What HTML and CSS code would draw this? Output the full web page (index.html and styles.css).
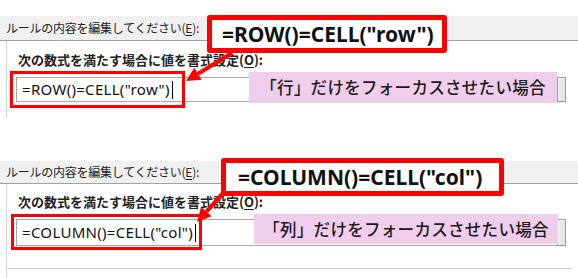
FILE: index.html
```html
<!DOCTYPE html>
<html lang="ja">
<head>
<meta charset="utf-8">
<link rel="stylesheet" href="styles.css">
</head>
<body>
<section class="panel panel-row">
  <div class="head">ルールの内容を編集してください(<u>E</u>):</div>
  <div class="frame">
    <div class="label">次の数式を満たす場合に値を書式設定(<u>O</u>):</div>
    <div class="field-row">
      <div class="field">=ROW()=CELL("row")<span class="caret"></span></div>
      <div class="ref-btn"></div>
    </div>
  </div>
  <div class="hilite"></div>
  <svg class="arrow" width="578" height="120" viewBox="0 0 578 120">
    <line x1="232" y1="37" x2="198" y2="57.7" stroke="#f00" stroke-width="4"/>
    <polygon points="186,65 201.6,63.7 194.3,51.7" fill="#f00"/>
  </svg>
  <div class="callout">=ROW()=CELL("row")</div>
  <div class="note">「行」だけをフォーカスさせたい場合</div>
</section>

<section class="panel panel-col">
  <div class="head">ルールの内容を編集してください(<u>E</u>):</div>
  <div class="frame">
    <div class="label">次の数式を満たす場合に値を書式設定(<u>O</u>):</div>
    <div class="field-row">
      <div class="field">=COLUMN()=CELL("col")<span class="caret"></span></div>
      <div class="ref-btn"></div>
    </div>
    <div class="divider"></div>
  </div>
  <div class="hilite"></div>
  <svg class="arrow" width="578" height="120" viewBox="0 0 578 120">
    <line x1="232" y1="22" x2="206.4" y2="50.6" stroke="#f00" stroke-width="4"/>
    <polygon points="197,61 211.6,55.3 201.1,45.9" fill="#f00"/>
  </svg>
  <div class="callout">=COLUMN()=CELL("col")</div>
  <div class="note">「列」だけをフォーカスさせたい場合</div>
</section>
</body>
</html>
```

FILE: styles.css
```css
html, body {
  margin: 0;
  padding: 0;
  background: #fff;
  width: 578px;
  height: 278px;
  overflow: hidden;
  font-family: "Noto Sans CJK JP", "Noto Sans", sans-serif;
  color: #1a1a1a;
}

.panel {
  position: relative;
}

.panel-row {
  margin-top: 16px;
}

.panel-col {
  margin-top: 43px;
}

.head {
  height: 24px;
  line-height: 24px;
  background: #f0f0f0;
  border-bottom: 1px solid #a0a0a0;
  padding-left: 6px;
  font-size: 12px;
  letter-spacing: -0.25px;
  color: #222;
}

.panel-col .head {
  height: 22px;
  line-height: 22px;
}

.head u, .label u {
  text-decoration-thickness: 1px;
  text-underline-offset: 2px;
}

.frame {
  margin-left: 6px;
  border-left: 1px solid #d0d0d0;
  padding: 10px 0 16px 0;
}

.panel-col .frame {
  padding: 9px 0 0 0;
}

.label {
  padding-left: 11px;
  font-size: 13px;
  font-weight: bold;
  line-height: 18px;
  color: #222;
}

.field-row {
  display: flex;
  margin: 8px 0 0 9px;
  width: 550px;
}

.field {
  flex: 1;
  height: 23px;
  border: 1px solid #a8a8a8;
  border-right: none;
  font-family: "Noto Sans", sans-serif;
  font-size: 15px;
  letter-spacing: 0.3px;
  line-height: 23px;
  padding-left: 5px;
  display: flex;
  align-items: center;
  color: #111;
}

.panel-col .field {
  height: 25px;
}

.caret {
  display: inline-block;
  width: 1px;
  height: 18px;
  background: #000;
  margin-left: 2px;
}

.ref-btn {
  width: 7px;
  border: 1px solid #9a9a9a;
  background: #e6e6e6;
  box-shadow: inset 1px 1px 0 #fff;
}

.divider {
  margin-top: 22px;
  height: 10px;
  border-top: 1px solid #cfcfcf;
  width: 564px;
}

.hilite {
  position: absolute;
  left: 10px;
  top: 55px;
  width: 169px;
  height: 31px;
  border: 3px solid #f00;
}

.panel-col .hilite {
  left: 11px;
  top: 53px;
  width: 185px;
  height: 30px;
}

.arrow {
  position: absolute;
  left: 0;
  top: 0;
  pointer-events: none;
}

.callout {
  position: absolute;
  left: 207px;
  top: -1px;
  width: 220px;
  height: 28px;
  border: 5px solid #f00;
  border-radius: 3px;
  background: #fff;
  padding-left: 10px;
  font-family: "Noto Sans", sans-serif;
  font-size: 21px;
  font-weight: bold;
  line-height: 28px;
  color: #111;
}

.panel-col .callout {
  left: 221px;
  top: -3px;
  width: 261px;
  padding-left: 12px;
}

.note {
  position: absolute;
  left: 249px;
  top: 56px;
  width: 308px;
  height: 31px;
  background: #f1cdec;
  font-size: 16.5px;
  font-weight: 500;
  line-height: 31px;
  text-align: center;
  letter-spacing: 0.3px;
  color: #1a1a1a;
}

.panel-col .note {
  left: 254px;
  top: 53px;
  width: 304px;
  height: 30px;
  line-height: 30px;
}
```
